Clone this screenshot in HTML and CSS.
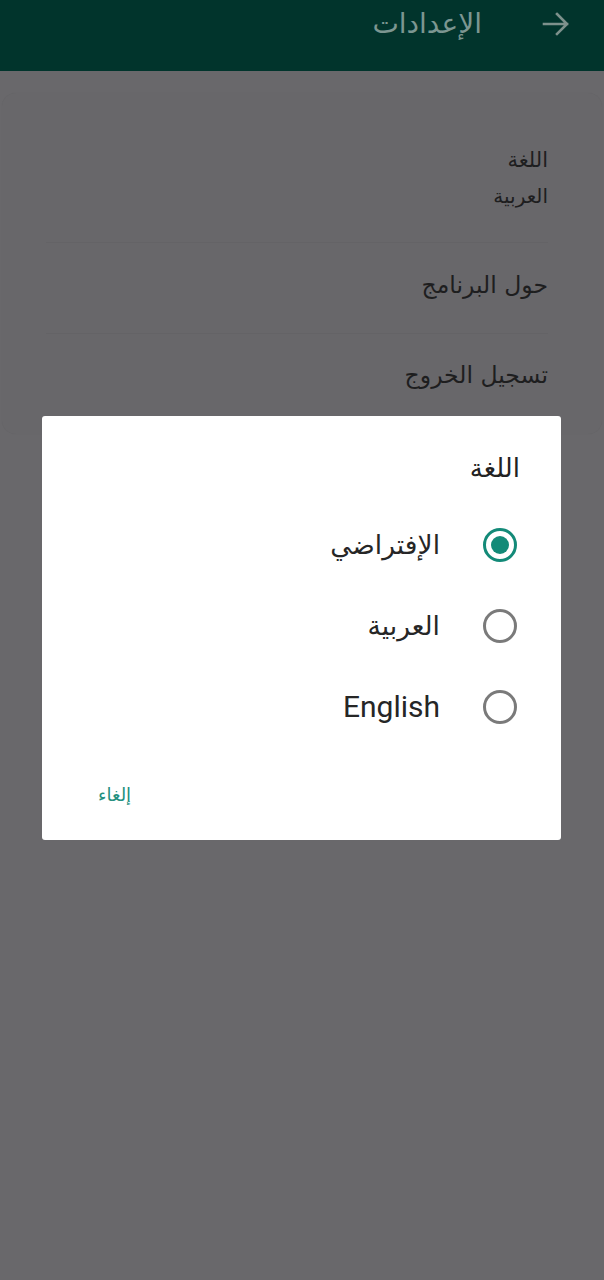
FILE: index.html
```html
<!DOCTYPE html>
<html lang="ar" dir="rtl">
<head>
<meta charset="utf-8">
<link rel="stylesheet" href="styles.css">
</head>
<body>
<header class="appbar">
  <svg class="back" width="28" height="24" viewBox="0 0 28 24"><path d="M2 12H25M15 2L25 12L15 22" fill="none" stroke="currentColor" stroke-width="2.6" stroke-linecap="square"/></svg>
  <h1 class="appbar-title">الإعدادات</h1>
</header>
<main class="card">
  <div class="item item-lang">
    <div class="item-title">اللغة</div>
    <div class="item-sub">العربية</div>
  </div>
  <div class="item item-about"><div class="item-title big">حول البرنامج</div></div>
  <div class="item item-logout"><div class="item-title big">تسجيل الخروج</div></div>
</main>
<div class="dialog">
  <div class="dialog-title">اللغة</div>
  <div class="options">
    <div class="option"><span class="radio checked"></span><span class="opt-label">الإفتراضي</span></div>
    <div class="option"><span class="radio"></span><span class="opt-label">العربية</span></div>
    <div class="option"><span class="radio"></span><span class="opt-label en">English</span></div>
  </div>
  <div class="actions"><span class="btn">إلغاء</span></div>
</div>
</body>
</html>
```

FILE: styles.css
```css
html, body { margin: 0; padding: 0; }
body {
  background: #69686b;
  font-family: "DejaVu Sans", Roboto, sans-serif;
  width: 604px;
  height: 1280px;
  overflow: hidden;
}
.appbar {
  height: 71px;
  background: #01342c;
  display: flex;
  align-items: flex-start;
  padding-top: 6px;
  box-sizing: border-box;
  padding-right: 34px;
  gap: 60px;
}
.back { color: #7d918c; margin-top: 6px; }
.appbar-title {
  margin: 0;
  font-weight: normal;
  font-size: 28px;
  line-height: 36px;
  color: #7c9691;
}
.card {
  margin: 22px 2px 0;
  height: 341px;
  border-radius: 14px;
  background: #68676a;
  box-shadow: 0 0 1px rgba(0,0,0,0.08);
  display: flex;
  flex-direction: column;
  padding-right: 54px;
  padding-left: 44px;
  box-sizing: border-box;
}
.item { color: #1e1e1f; }
.item-title { font-size: 21px; line-height: 28px; }
.item-title.big { font-size: 23.5px; line-height: 30px; }
.item-sub { font-size: 20px; line-height: 28px; margin-top: 8px; }
.item-lang { padding-top: 53px; height: 150px; box-sizing: border-box; border-bottom: 1px solid #646366; }
.item-about { height: 91px; padding-top: 27px; box-sizing: border-box; border-bottom: 1px solid #646366; }
.item-logout { padding-top: 26px; }
.dialog {
  position: absolute;
  top: 416px;
  left: 42px;
  width: 519px;
  height: 424px;
  background: #ffffff;
  border-radius: 3px;
  box-sizing: border-box;
  padding: 35px 41px 0 0;
  display: flex;
  flex-direction: column;
}
.dialog-title { font-size: 26px; line-height: 34px; color: #222; }
.options { margin-top: 19px; padding-right: 3px; }
.option {
  height: 81px;
  display: flex;
  align-items: center;
  gap: 43px;
}
.radio {
  width: 34px; height: 34px;
  box-sizing: border-box;
  border: 3px solid #7a7a7a;
  border-radius: 50%;
  display: flex; align-items: center; justify-content: center;
  flex: none;
}
.radio.checked { border-color: #138a78; }
.radio.checked::after {
  content: "";
  width: 18px; height: 18px;
  border-radius: 50%;
  background: #138a78;
}
.opt-label { font-size: 26.5px; line-height: 34px; color: #262626; }
.opt-label.en { font-family: Roboto, sans-serif; font-size: 30px; }
.actions {
  margin-top: 36px;
  display: flex;
  justify-content: flex-end;
  padding-left: 56px;
}
.btn { color: #23907e; font-size: 18px; line-height: 24px; }
```
